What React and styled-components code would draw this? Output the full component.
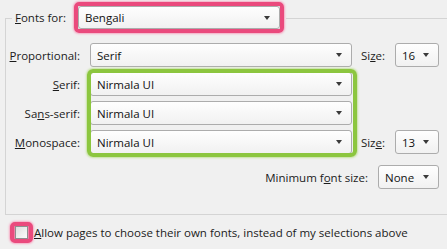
import React from "react";
import styled, { createGlobalStyle } from "styled-components";

const GlobalStyle = createGlobalStyle`
  html, body {
    margin: 0;
    padding: 0;
  }
  body {
    background: #f0f0f0;
    color: #1b1b1b;
    font-family: "Open Sans", "Noto Sans", sans-serif;
    font-size: 11.5px;
    overflow: hidden;
  }
`;

const Page = styled.div`
  width: 447px;
  height: 249px;
  overflow: hidden;
  padding-top: 2px;
  box-sizing: border-box;
`;

const Group = styled.fieldset`
  margin: 0 -20px 0 5px;
  padding: 8px 0 25px 6px;
  border: 1px solid #d4d4d4;
  min-width: 0;
`;

const Legend = styled.legend`
  padding: 0 2px 2px 3px;
`;

const HeaderRow = styled.div`
  display: flex;
  align-items: center;
  gap: 8px;
`;

const Key = styled.span`
  text-decoration: underline;
  text-underline-offset: 1px;
`;

const Highlight = styled.div`
  display: flex;
  border: 4px solid ${({ $color }) => $color};
  border-radius: 5px;
  padding: ${({ $pad }) => $pad || "0"};
  background: ${({ $fill }) => $fill || "transparent"};
  box-shadow: 0 0 2px 1px ${({ $glow }) => $glow};
`;

const Select = styled.div`
  box-sizing: border-box;
  width: ${({ $width }) => $width}px;
  height: ${({ $height }) => $height || 24}px;
  display: flex;
  align-items: center;
  justify-content: space-between;
  padding-left: 6px;
  border: 1px solid #acacac;
  border-radius: 3px;
  background: linear-gradient(#fefefe, #f1f1f1);
  color: #111;
`;

const Arrow = styled.span`
  width: 0;
  height: 0;
  margin-right: 9px;
  border-left: 3.5px solid transparent;
  border-right: 3.5px solid transparent;
  border-top: 4px solid #3a3a3a;
`;

const Grid = styled.div`
  display: grid;
  width: 427px;
  grid-template-columns: 68px 262px 23px 44px;
  grid-auto-rows: 24px;
  column-gap: 10px;
  row-gap: 5px;
`;

const Label = styled.div`
  grid-column: ${({ $col }) => $col || 1};
  grid-row: ${({ $row }) => $row};
  justify-self: end;
  align-self: center;
  white-space: nowrap;
`;

const Cell = styled.div`
  grid-column: ${({ $col }) => $col};
  grid-row: ${({ $row }) => $row};
`;

const GreenMark = styled.div`
  grid-column: 2;
  grid-row: 2 / 5;
  margin: -3px -5px -3px -3px;
  border: 4px solid #8cc63f;
  border-radius: 6px;
  box-shadow: 0 0 2px 1px #c4e29c;
  z-index: 1;
  pointer-events: none;
`;

const MinRow = styled.div`
  display: flex;
  width: 427px;
  justify-content: flex-end;
  align-items: center;
  gap: 10px;
  margin-top: 11px;
`;

const CheckRow = styled.div`
  display: flex;
  align-items: center;
  padding-left: 10px;
  margin-top: 7px;
  gap: 1px;
`;

const Box = styled.span`
  box-sizing: border-box;
  width: 13px;
  height: 13px;
  border: 1px solid #8e8f8f;
  background: linear-gradient(135deg, #dedede, #fbfbfb);
`;

const Drop = ({ width, height, value }) => (
  <Select $width={width} $height={height}>
    <span>{value}</span>
    <Arrow />
  </Select>
);

export default function App() {
  return (
    <Page>
      <GlobalStyle />
      <Group>
        <Legend>
          <HeaderRow>
            <span>
              <Key>F</Key>onts for:
            </span>
            <Highlight $color="#ea4a7d" $glow="#f6a9c3">
              <Drop width={202} height={23} value="Bengali" />
            </Highlight>
          </HeaderRow>
        </Legend>

        <Grid>
          <Label $row={1}>
            <Key>P</Key>roportional:
          </Label>
          <Cell $col={2} $row={1}>
            <Drop width={262} value="Serif" />
          </Cell>
          <Label $col={3} $row={1}>
            Si<Key>z</Key>e:
          </Label>
          <Cell $col={4} $row={1}>
            <Drop width={44} value="16" />
          </Cell>

          <Label $row={2}>
            <Key>S</Key>erif:
          </Label>
          <Cell $col={2} $row={2}>
            <Drop width={262} value="Nirmala UI" />
          </Cell>

          <Label $row={3}>
            Sa<Key>n</Key>s-serif:
          </Label>
          <Cell $col={2} $row={3}>
            <Drop width={262} value="Nirmala UI" />
          </Cell>

          <Label $row={4}>
            <Key>M</Key>onospace:
          </Label>
          <Cell $col={2} $row={4}>
            <Drop width={262} value="Nirmala UI" />
          </Cell>
          <Label $col={3} $row={4}>
            Siz<Key>e</Key>:
          </Label>
          <Cell $col={4} $row={4}>
            <Drop width={44} value="13" />
          </Cell>

          <GreenMark />
        </Grid>

        <MinRow>
          <span>
            Minimum f<Key>o</Key>nt size:
          </span>
          <Drop width={61} value="None" />
        </MinRow>
      </Group>

      <CheckRow>
        <Highlight $color="#ea4a7d" $glow="#f6a9c3" $fill="#f07fa6" $pad="0 1px">
          <Box />
        </Highlight>
        <span>
          <Key>A</Key>llow pages to choose their own fonts, instead of my selections above
        </span>
      </CheckRow>
    </Page>
  );
}
